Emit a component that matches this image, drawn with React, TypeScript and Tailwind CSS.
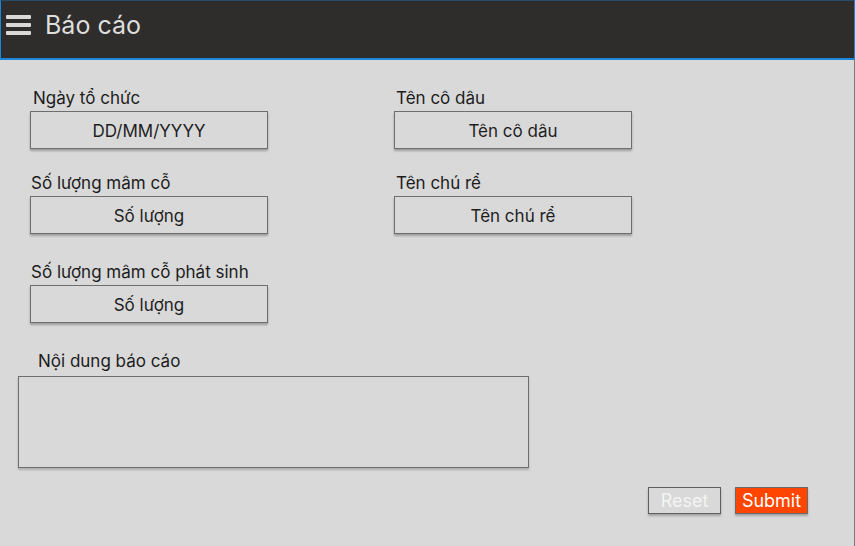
import type { ReactNode } from 'react';

function Field({ label, placeholder, labelClass = 'pl-[3px]' }: { label: string; placeholder: string; labelClass?: string }) {
  return (
    <div className="flex flex-col w-[238px]">
      <label className={`text-[17px] leading-[20px] text-[#1c1c1c] ${labelClass}`}>{label}</label>
      <input
        type="text"
        placeholder={placeholder}
        className="mt-[3px] h-[38px] w-full border border-[#6e6e6e] bg-[#d9d9d9] pt-[1px] text-center text-[17px] text-[#1e1e1e] placeholder:text-[#1e1e1e] shadow-[0_2px_2px_rgba(0,0,0,0.28)] outline-none"
      />
    </div>
  );
}

function Row({ children, className = '' }: { children: ReactNode; className?: string }) {
  return <div className={`flex gap-[126px] ${className}`}>{children}</div>;
}

export default function App() {
  return (
    <div className="w-[855px] h-[546px] flex flex-col bg-[#d9d9d9] font-['Inter','Noto_Sans',sans-serif] overflow-hidden">
      <header className="h-[60px] shrink-0 flex items-center gap-[14px] pl-[5px] pb-[9px] bg-[#2e2d2b] border-x border-t border-b-2 border-x-[#1b87db] border-t-[#264c6c] border-b-[#1b87db]">
        <div className="flex flex-col gap-[4px]">
          <span className="block w-[25px] h-[4px] rounded-[1px] bg-[#d9d9d9]" />
          <span className="block w-[25px] h-[4px] rounded-[1px] bg-[#d9d9d9]" />
          <span className="block w-[25px] h-[4px] rounded-[1px] bg-[#d9d9d9]" />
        </div>
        <h1 className="text-[25px] leading-[32px] text-[#dedede]">Báo cáo</h1>
      </header>

      <main className="flex-1 flex flex-col pt-[28px] border-r border-[#7a7a7a]">
        <div className="pl-[30px]">
          <Row>
            <Field label="Ngày tổ chức" placeholder="DD/MM/YYYY" />
            <Field label="Tên cô dâu" placeholder="Tên cô dâu" labelClass="pl-[2px]" />
          </Row>
          <Row className="mt-[24px]">
            <Field label="Số lượng mâm cỗ" placeholder="Số lượng" labelClass="pl-[1px]" />
            <Field label="Tên chú rể" placeholder="Tên chú rể" labelClass="pl-[2px]" />
          </Row>
          <Row className="mt-[28px]">
            <Field label="Số lượng mâm cỗ phát sinh" placeholder="Số lượng" labelClass="pl-[1px]" />
          </Row>
        </div>

        <div className="mt-[28px] pl-[18px] flex flex-col">
          <label className="pl-[20px] text-[17px] leading-[20px] text-[#1c1c1c]">Nội dung báo cáo</label>
          <textarea className="mt-[5px] w-[511px] h-[92px] resize-none border border-[#6e6e6e] bg-[#d9d9d9] shadow-[0_2px_2px_rgba(0,0,0,0.2)] outline-none" />
        </div>

        <div className="mt-[19px] flex justify-end gap-[14px] pr-[46px]">
          <button
            type="reset"
            className="w-[73px] h-[27px] border border-[#5e5e5e] bg-[#d9d9d9] text-[18px] leading-none text-[#f4f4f4] shadow-[0_2px_2px_rgba(0,0,0,0.25)]"
          >
            Reset
          </button>
          <button
            type="submit"
            className="w-[73px] h-[27px] border border-[#6a6a6a] bg-[#ff4500] text-[18px] leading-none text-white shadow-[0_2px_2px_rgba(0,0,0,0.25)]"
          >
            Submit
          </button>
        </div>
      </main>
    </div>
  );
}
